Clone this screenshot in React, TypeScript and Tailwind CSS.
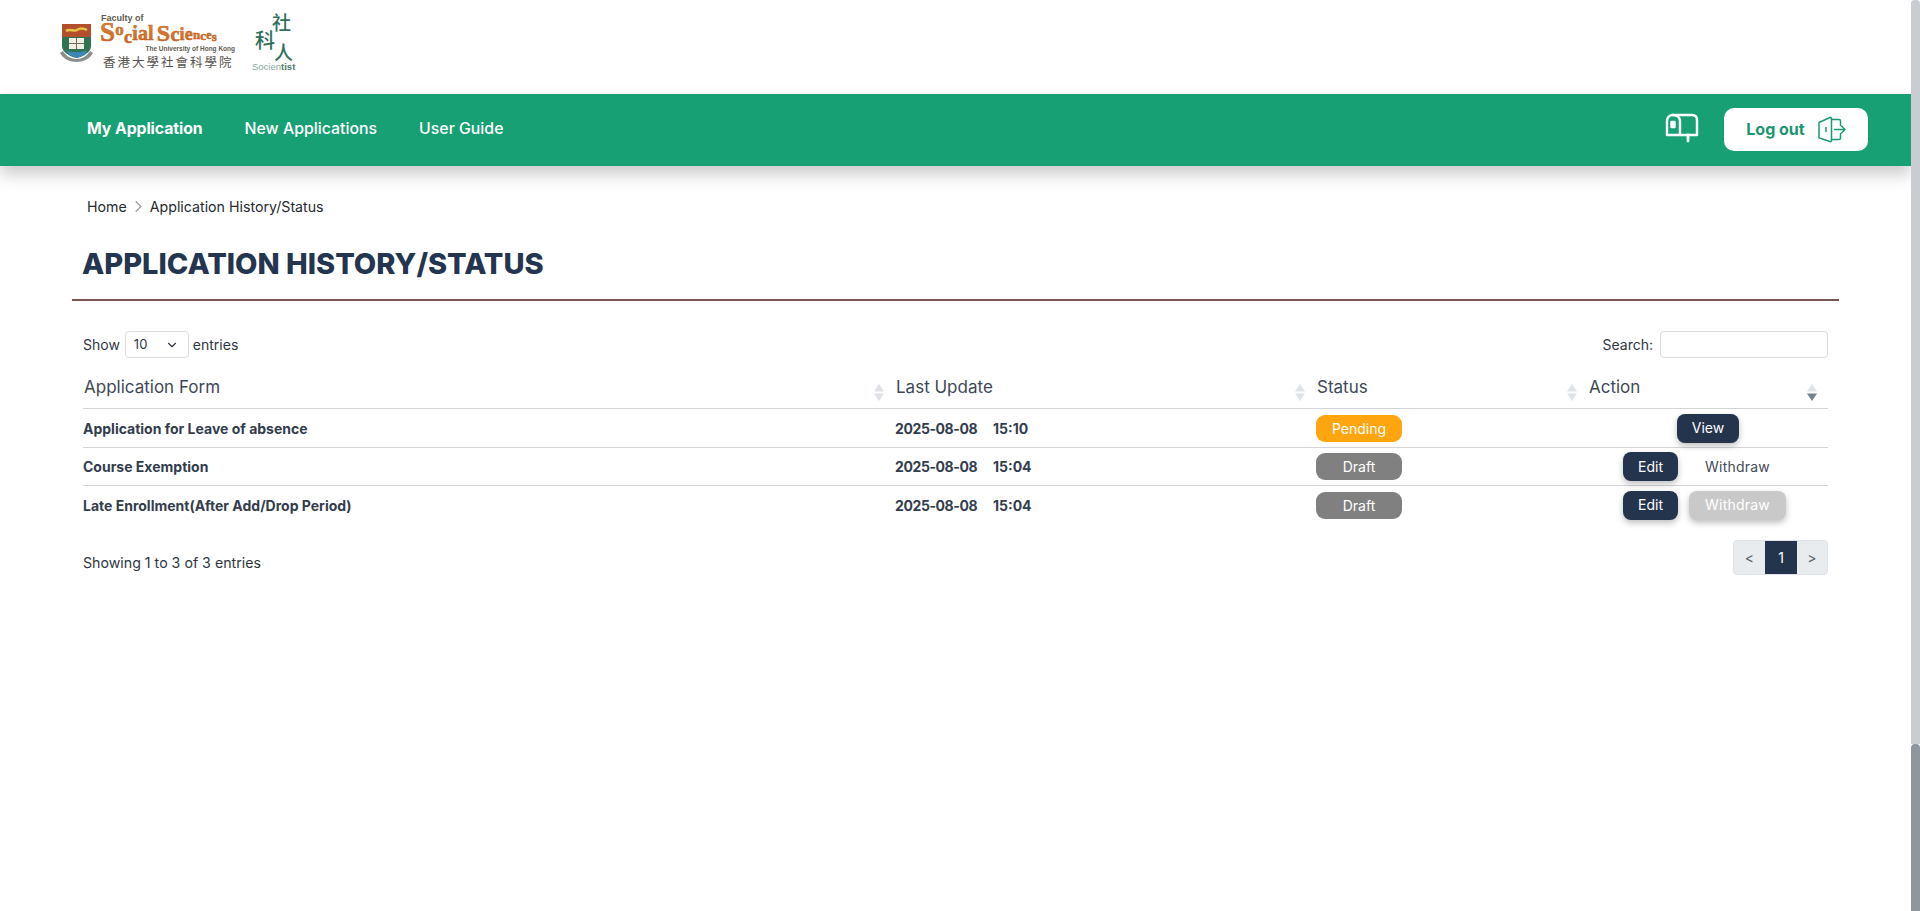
import { ChevronDown, ChevronRight } from "lucide-react";

const rows = [
  { form: "Application for Leave of absence", date: "2025-08-08", time: "15:10", status: "Pending", h: "h-[39px]" },
  { form: "Course Exemption", date: "2025-08-08", time: "15:04", status: "Draft", h: "h-[38px]" },
  { form: "Late Enrollment(After Add/Drop Period)", date: "2025-08-08", time: "15:04", status: "Draft", h: "h-[39px]" },
];

const Logo = () => (
  <svg width="300" height="94" viewBox="0 0 300 94" className="block">
    <defs>
      <linearGradient id="orange" x1="0" y1="0" x2="0" y2="1">
        <stop offset="0" stopColor="#e0913a" />
        <stop offset="1" stopColor="#c4601f" />
      </linearGradient>
    </defs>
    {/* crest */}
    <rect x="62" y="24" width="29" height="13" fill="#b3502b" />
    <path d="M66 31c4-3 8 1 11-1s6-2 10 0" fill="none" stroke="#e8c548" strokeWidth="2.5" />
    <path d="M62 37h29v9c0 6-7 10-14.500 12C69 56 62 52 62 46z" fill="#2f7352" />
    <rect x="69" y="38" width="15" height="11" fill="#f1efe4" />
    <path d="M69 43.500h15M76.500 38v11" stroke="#6c6a5c" strokeWidth="1" />
    <path d="M66 50c5 3 16 3 21 0l-2 5-8 3-8-3z" fill="#3d86b8" />
    <path d="M60 53c3 6 10 9 16.500 9S90 59 93 53l-3-2c-3 5-8 8-13.500 8S66 56 63 51z" fill="#8b8f8c" />
    {/* wordmark */}
    <text x="101" y="21" fontFamily="'Liberation Sans', sans-serif" fontSize="9" fontWeight="700" fill="#5f5a52">
      Faculty of
    </text>
    <text x="100" y="41" fontFamily="'Liberation Serif', serif" fontWeight="700" fill="url(#orange)" stroke="#c4601f" strokeWidth="0.5" letterSpacing="0.2">
      <tspan fontSize="27">S</tspan>
      <tspan fontSize="17" dy="-6">o</tspan>
      <tspan fontSize="18" dy="8">c</tspan>
      <tspan fontSize="20" dy="-3">ial</tspan>
      <tspan fontSize="24" dx="3" dy="1">S</tspan>
      <tspan fontSize="20">c</tspan>
      <tspan fontSize="18" dy="-1">ie</tspan>
      <tspan fontSize="13" dy="-1">n</tspan>
      <tspan fontSize="13" dy="1">c</tspan>
      <tspan fontSize="12" dy="-1">e</tspan>
      <tspan fontSize="13" dy="2">s</tspan>
    </text>
    <text x="235" y="51" textAnchor="end" fontFamily="'Liberation Sans', sans-serif" fontSize="6.500" fontWeight="700" fill="#5f5a52">
      The University of Hong Kong
    </text>
    <text x="103" y="67" fontFamily="'Noto Sans CJK TC', sans-serif" fontSize="12.500" letterSpacing="2" fill="#55524c">
      香港大學社會科學院
    </text>
    {/* scientist mark */}
    <g fontFamily="'Noto Sans CJK TC', sans-serif" fontWeight="500" fill="#2f6f5c">
      <text x="272" y="30" fontSize="19">社</text>
      <text x="255" y="48" fontSize="20">科</text>
      <text x="274" y="60" fontSize="19">人</text>
    </g>
    <text x="252" y="70" fontFamily="'Liberation Sans', sans-serif" fontSize="9.500" fill="#86a89c">
      Socien
      <tspan fontWeight="700" fill="#4c7c6c">tist</tspan>
    </text>
  </svg>
);

const Mailbox = () => (
  <svg width="34" height="30" viewBox="0 0 34 30" fill="none" stroke="#fff" strokeWidth="2.400" strokeLinecap="round" strokeLinejoin="round">
    <path d="M8 2h19c3 0 5 2 5 5v15H2V8c0-3.500 2.500-6 6-6z" />
    <path d="M15 22V8c0-3.500-3-6-7-6" />
    <path d="M6.500 9h3v5h-3z" fill="#fff" />
    <path d="M23 22v6" strokeWidth="2.800" />
  </svg>
);

const Door = () => (
  <svg width="28" height="27" viewBox="0 0 28 27" fill="none" stroke="#1a9a73" strokeWidth="1.500" strokeLinecap="round" strokeLinejoin="round">
    <path d="M1 6.500 12 1.500a1 1 0 0 1 1.500 1v22a1 1 0 0 1-1.500 1L1.500 22a1 1 0 0 1-.5-1z" />
    <path d="M13.500 3.500H21a1.500 1.500 0 0 1 1.500 1.500v4.500M22.500 17.500V22a1.500 1.500 0 0 1-1.500 1.500h-7.500" />
    <path d="M8 11.500v4" />
    <path d="M16.500 13.500h10.500M23.500 10l3.500 3.500-3.500 3.500" />
  </svg>
);

const SortIcon = ({ active }: { active?: boolean }) => (
  <svg width="10" height="17" viewBox="0 0 10 17" className="absolute right-[11px] top-[26px]">
    <path d="M5 0 10 7.500H0z" fill="#dfe2e6" />
    <path d="M5 17 0 9.500h10z" fill={active ? "#76818e" : "#dfe2e6"} />
  </svg>
);

const Th = ({ label, width, active }: { label: string; width: string; active?: boolean }) => (
  <th className={`${width} relative p-0 pl-px pb-[9px] text-left align-bottom text-[17px] font-normal leading-[24px] text-[#3d4856]`}>
    {label}
    <SortIcon active={active} />
  </th>
);

const Btn = ({ children, w, className }: { children: string; w: string; className: string }) => (
  <button className={`${w} h-[29px] rounded-[8px] text-[14px] leading-none ${className}`}>{children}</button>
);

export default function App() {
  return (
    <div className="flex h-[911px] w-full overflow-hidden bg-white font-['Inter',sans-serif] text-[14px]">
      <div className="min-w-0 flex-1">
        <header className="h-[94px]">
          <Logo />
        </header>
        <nav className="flex h-[72px] items-center justify-between bg-[#18a075] pl-[87px] pr-[43px] shadow-[0_8px_16px_rgba(0,0,0,0.22)]">
          <div className="-mt-[3px] flex items-center gap-[42px] text-[15.850px] text-white">
            <a className="font-bold tracking-[-0.1px]">My Application</a>
            <a className="font-medium">New Applications</a>
            <a className="font-medium">User Guide</a>
          </div>
          <div className="-mt-[2px] flex items-center gap-[25px]">
            <div className="-mt-[3px]">
              <Mailbox />
            </div>
            <button className="flex h-[43px] w-[144px] items-center justify-center gap-[13px] rounded-[10px] bg-white text-[16px] font-bold text-[#18966f]">
              Log out
              <Door />
            </button>
          </div>
        </nav>

        <div className="flex items-center pl-[87px] pt-[31px] text-[14.200px] leading-[18px] text-[#262a30]">
          <span>Home</span>
          <ChevronRight size={19} strokeWidth={1.5} className="mx-[2px] text-[#9a9a9a]" />
          <span>Application History/Status</span>
        </div>

        <h1 className="pl-[82px] pt-[28px] text-[29px] font-extrabold leading-[40px] text-[#243550]">APPLICATION HISTORY/STATUS</h1>
        <div className="ml-[72px] mt-[15px] h-[2px] w-[1767px] bg-[#7d5550]" />

        <div className="ml-[83px] w-[1745px]">
          <div className="flex items-center justify-between pt-[30px] text-[#30363f]">
            <div className="flex items-center gap-[4px]">
              <span className="pr-px">Show</span>
              <div className="flex h-[27px] w-[64px] items-center justify-between rounded-[4px] border border-[#dddddd] pl-[8px] pr-[9px] text-[13px]">
                10
                <ChevronDown size={14} strokeWidth={2} />
              </div>
              <span>entries</span>
            </div>
            <div className="flex items-center gap-[7px]">
              <span>Search:</span>
              <input className="h-[27px] w-[168px] rounded-[4px] border border-[#dddddd]" />
            </div>
          </div>

          <table className="w-[1745px] table-fixed border-collapse">
            <thead>
              <tr className="h-[50px] border-b border-[#d2d4d6]">
                <Th label="Application Form" width="w-[812px]" />
                <Th label="Last Update" width="w-[421px]" />
                <Th label="Status" width="w-[272px]" />
                <Th label="Action" width="w-[240px]" active />
              </tr>
            </thead>
            <tbody>
              {rows.map((r, i) => (
                <tr key={r.form} className={`${r.h} ${i < 2 ? "border-b border-[#d2d4d6]" : ""}`}>
                  <td className="p-0 pt-[1px] font-bold text-[#333d4d]">{r.form}</td>
                  <td className="p-0 pt-[1px] font-bold text-[#333d4d]">
                    <span className="inline-block w-[98px] tracking-[-0.4px]">{r.date}</span>
                    {r.time}
                  </td>
                  <td className="p-0 pt-[1px]">
                    <div className={`flex h-[27px] w-[86px] items-center justify-center rounded-[9px] text-[14px] text-white ${r.status === "Pending" ? "bg-[#ffa50f]" : "bg-[#808080]"}`}>
                      {r.status}
                    </div>
                  </td>
                  <td className="p-0 pt-[1px]">
                    {i === 0 && (
                      <div className="flex justify-center">
                        <Btn w="w-[62px]" className="bg-[#25344d] text-white shadow-[0_3px_6px_rgba(0,0,0,0.25)]">View</Btn>
                      </div>
                    )}
                    {i > 0 && (
                      <div className="flex justify-center gap-[11px] pr-[7px]">
                        <Btn w="w-[55px]" className="bg-[#25344d] text-white shadow-[0_3px_6px_rgba(0,0,0,0.25)]">Edit</Btn>
                        {i === 1 ? (
                          <Btn w="w-[97px]" className="bg-white tracking-[0.2px] text-[#454c57]">Withdraw</Btn>
                        ) : (
                          <Btn w="w-[97px]" className="bg-[#c9c9c9] tracking-[0.2px] text-white shadow-[0_3px_6px_rgba(0,0,0,0.25)]">Withdraw</Btn>
                        )}
                      </div>
                    )}
                  </td>
                </tr>
              ))}
            </tbody>
          </table>

          <div className="flex items-start justify-between pt-[16px] text-[#30363f]">
            <span className="pt-[14px] text-[14.200px] leading-[18px]">Showing 1 to 3 of 3 entries</span>
            <div className="flex h-[35px] w-[95px] overflow-hidden rounded-[4px] border border-[#dfe3e7] bg-[#e9ecef] text-[#5b6570]">
              <span className="flex w-[31px] items-center justify-center">&lt;</span>
              <span className="flex w-[32px] items-center justify-center bg-[#25344d] text-white">1</span>
              <span className="flex flex-1 items-center justify-center">&gt;</span>
            </div>
          </div>
        </div>
      </div>

      {/* window scrollbar */}
      <div className="flex w-[9px] flex-col">
        <div className="h-[744px] rounded-t-[4px] bg-[#c9cdd1]" />
        <div className="flex-1 rounded-t-[4px] bg-[#8f969d]" />
      </div>
    </div>
  );
}
